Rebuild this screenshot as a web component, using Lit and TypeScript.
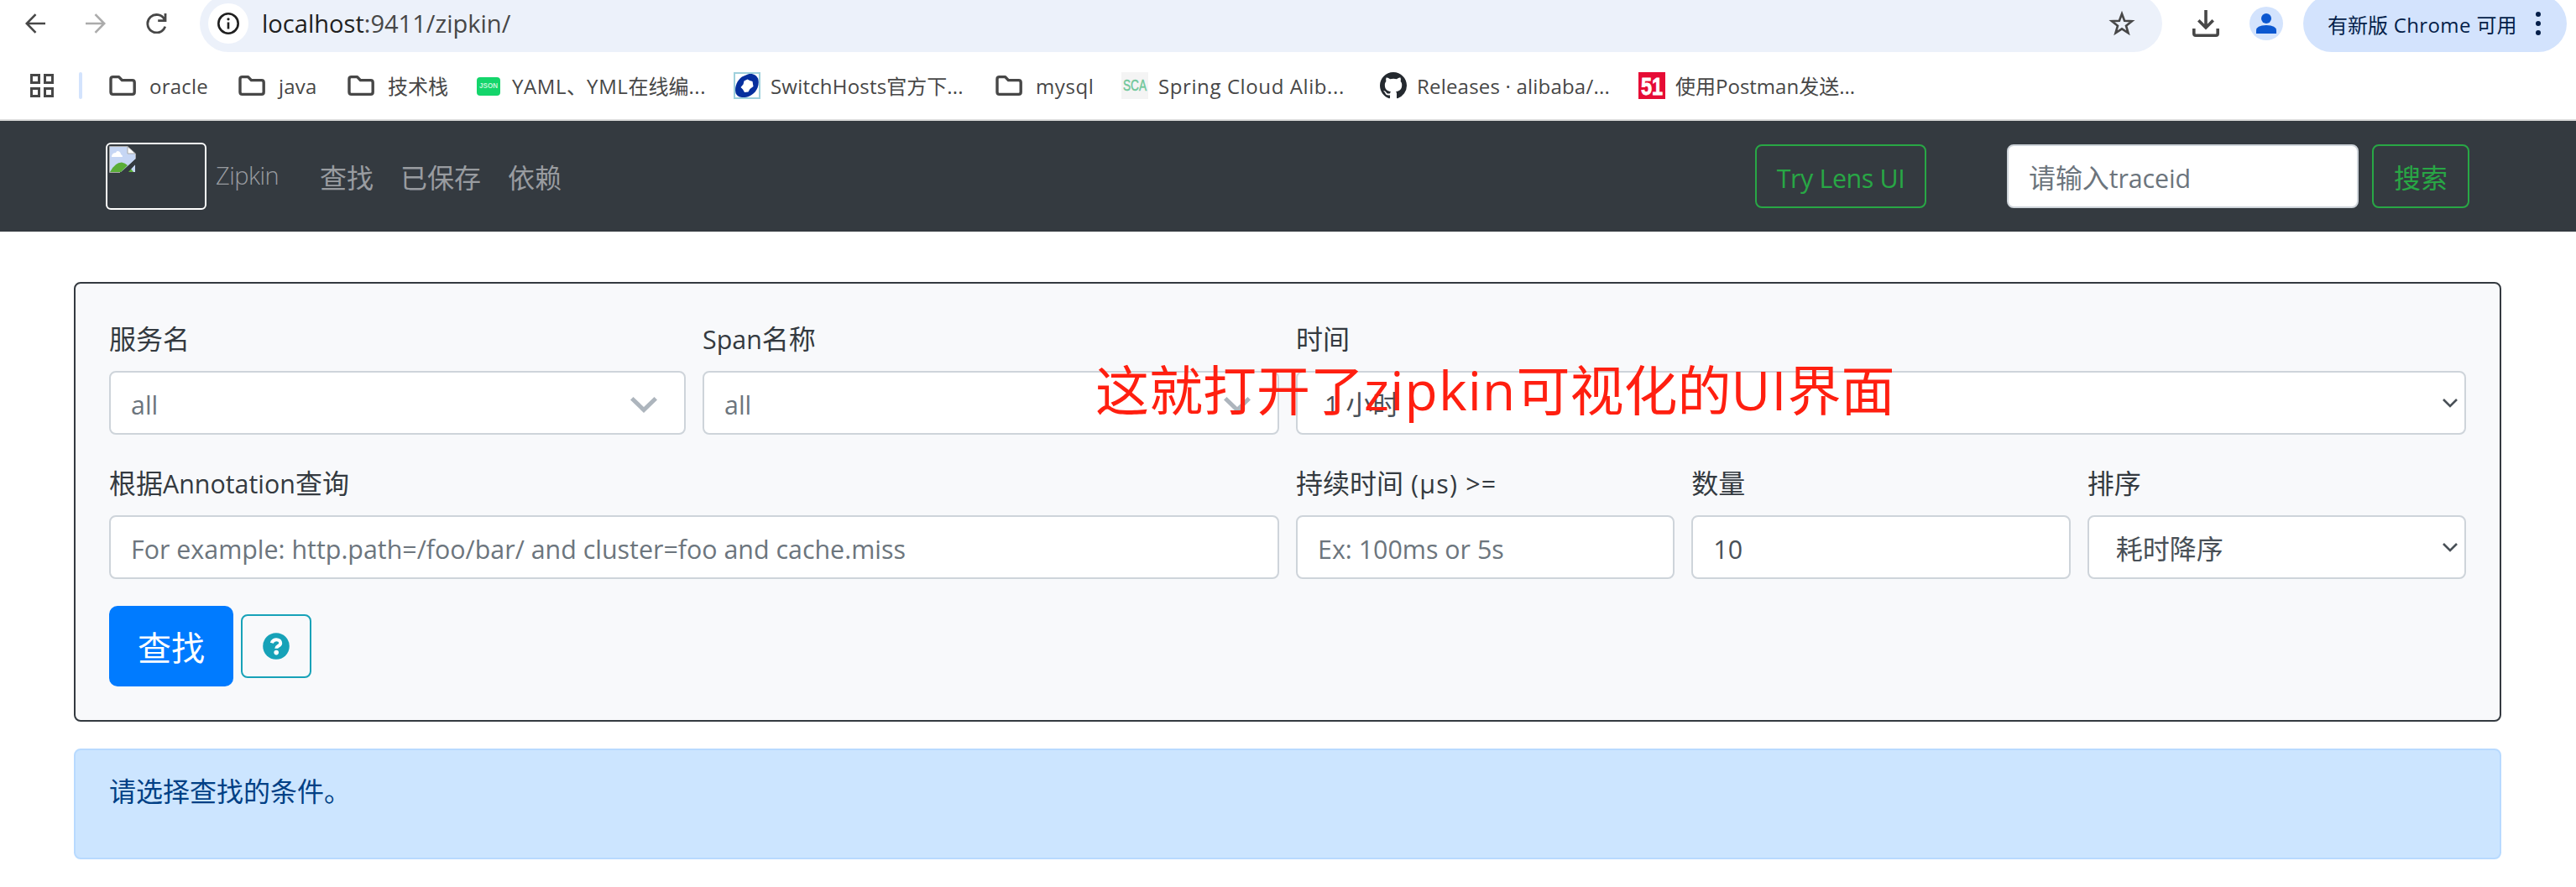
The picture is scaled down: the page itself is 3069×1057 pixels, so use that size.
import { LitElement, html, css, svg, TemplateResult } from "lit";
import { customElement } from "lit/decorators.js";

// Latin runs are set slightly smaller than the Chinese characters beside them.
const mixed = (text: string) =>
  text
    .split(/([\u3000-\u9fff\uff00-\uffef]+)/)
    .filter((part) => part.length > 0)
    .map((part) =>
      /[\u3000-\u9fff\uff00-\uffef]/.test(part)
        ? html`<span class="zh">${part}</span>`
        : html`<span class="en">${part}</span>`
    );

const folderIcon = html`<svg width="32" height="32" viewBox="0 0 32 32">
  <path d="M2 8.2Q2 5.6 4.6 5.6H11.6L15.4 9.6H27.6Q30.2 9.6 30.2 12.2V23.8Q30.2 26.4 27.6 26.4H4.6Q2 26.4 2 23.8Z" fill="none" stroke="#474747" stroke-width="3.4" stroke-linejoin="round"/>
</svg>`;

const jsonIcon = html`<svg width="32" height="32" viewBox="0 0 32 32">
  <rect x="2" y="6" width="28" height="22" rx="4" fill="#14d56b"/>
  <text x="16" y="19" text-anchor="middle" textLength="22" lengthAdjust="spacingAndGlyphs" font-family="Liberation Sans, sans-serif" font-size="9" font-weight="700" fill="#c4f6d9">JSON</text>
</svg>`;

const switchHostsIcon = html`<svg width="32" height="32" viewBox="0 0 32 32">
  <rect x="1" y="1" width="30" height="30" fill="#fff" stroke="#9fd0dc" stroke-width="2"/>
  <path d="M17 2.5C22 1 28 3 29.5 9C31 18 26 25 19 28.5C13 31 5 31 2.5 25C0.5 17 5 9 10 5.5Z" fill="#062f9e"/>
  <path d="M16.5 8.5Q19 10 22.5 11L23.5 17L19.5 20L17.5 23.5L13 24L11 20.5L8.5 18L11.5 14.5L12.5 10.5Z" fill="#fff"/>
</svg>`;

const scaIcon = html`<svg width="32" height="32" viewBox="0 0 32 32">
  <rect width="32" height="32" fill="#f4f4f4"/>
  <text x="16" y="22" text-anchor="middle" textLength="28" lengthAdjust="spacingAndGlyphs" font-family="Liberation Sans, sans-serif" font-size="18.5" fill="#6fc79a" stroke="#6fc79a" stroke-width=".5">SCA</text>
</svg>`;

const githubIcon = html`<svg width="32" height="32" viewBox="0 0 16 16">
  <path fill="#24292f" d="M8 0C3.58 0 0 3.58 0 8c0 3.54 2.29 6.53 5.47 7.59.4.07.55-.17.55-.38 0-.19-.01-.82-.01-1.49-2.01.37-2.53-.49-2.69-.94-.09-.23-.48-.94-.82-1.13-.28-.15-.68-.52-.01-.53.63-.01 1.08.58 1.23.82.72 1.21 1.87.87 2.33.66.07-.52.28-.87.51-1.07-1.78-.2-3.64-.89-3.64-3.95 0-.87.31-1.59.82-2.15-.08-.2-.36-1.02.08-2.12 0 0 .67-.21 2.2.82.64-.18 1.32-.27 2-.27s1.36.09 2 .27c1.53-1.04 2.2-.82 2.2-.82.44 1.1.16 1.92.08 2.12.51.56.82 1.27.82 2.15 0 3.07-1.87 3.75-3.65 3.95.29.25.54.73.54 1.48 0 1.07-.01 1.93-.01 2.2 0 .21.15.46.55.38A8.01 8.01 0 0 0 16 8c0-4.42-3.58-8-8-8Z"/>
</svg>`;

const ctoIcon = html`<svg width="32" height="32" viewBox="0 0 32 32">
  <rect width="32" height="32" fill="#e60c35"/>
  <text x="16" y="26.5" text-anchor="middle" textLength="26" lengthAdjust="spacingAndGlyphs" font-family="Liberation Sans, sans-serif" font-size="29" font-weight="700" fill="#fff" stroke="#fff" stroke-width=".8">51</text>
</svg>`;

const bookmarks: { icon: TemplateResult; label: string; cls: string }[] = [
  { icon: folderIcon, label: "oracle", cls: "wide" },
  { icon: folderIcon, label: "java", cls: "wide" },
  { icon: folderIcon, label: "技术栈", cls: "wide" },
  { icon: jsonIcon, label: "YAML、YML在线编...", cls: "loose" },
  { icon: switchHostsIcon, label: "SwitchHosts官方下...", cls: "" },
  { icon: folderIcon, label: "mysql", cls: "wide loose" },
  { icon: scaIcon, label: "Spring Cloud Alib...", cls: "loose" },
  { icon: githubIcon, label: "Releases · alibaba/...", cls: "" },
  { icon: ctoIcon, label: "使用Postman发送...", cls: "tight" },
];

const base = css`
  * { box-sizing: border-box; }
  svg { display: block; flex: none; }
  .en { font-size: 0.95em; }
`;

@customElement("browser-chrome")
class BrowserChrome extends LitElement {
  static styles = [base, css`
    :host { display: block; background: #fff; }
    .toolbar { display: flex; align-items: center; height: 68px; margin-top: -6px; padding-left: 30px; }
    .nav { display: flex; gap: 48px; margin-right: 38px; }
    .address { display: flex; align-items: center; width: 2338px; height: 68px; border-radius: 34px; background: #ecf1fa; padding: 0 32px 0 10px; margin-right: 36px; }
    .info { display: flex; align-items: center; justify-content: center; width: 48px; height: 48px; border-radius: 50%; background: #fff; }
    .url { flex: 1; margin-left: 16px; font-size: 30.6px; color: #474747; white-space: pre; padding-bottom: 2px; }
    .host { color: #1f1f1f; }
    .avatar { margin: 0 24px 0 36px; }
    .update { display: flex; align-items: center; justify-content: space-between; width: 314px; height: 68px; border-radius: 34px; background: #d3e3fd; color: #041e49; padding: 0 31px 0 29px; font-size: 24px; white-space: pre; }
    .update .en { font-size: 1em; letter-spacing: 0.4px; }
    .bar { display: flex; align-items: center; height: 80px; padding-left: 36px; font-size: 24px; color: #474747; }
    .sep { width: 4px; height: 32px; border-radius: 2px; background: #d3e3fd; margin: 0 32px 0 30px; }
    .marks { display: grid; grid-template-columns: 154px 130px 152px 308px 312px 150px 308px 308px auto; }
    .mark { display: flex; align-items: center; gap: 12px; }
    .text { white-space: pre; line-height: 34px; padding-top: 1px; }
    .mark .en { font-size: 1em; letter-spacing: 0.2px; }
    .mark.wide { gap: 16px; }
    .mark.loose .en { letter-spacing: 0.6px; }
    .mark.tight .en { letter-spacing: 0; }
    .line { height: 2px; background: #dcdcdc; }
  `];
  render() {
    return html`
      <div class="toolbar">
        <div class="nav">
          <svg width="24" height="24" viewBox="0 0 24 24" fill="none" stroke="#474747" stroke-width="2.6"><path d="M24 12H2M12.5 1.2L1.8 12L12.5 22.8"/></svg>
          <svg width="24" height="24" viewBox="0 0 24 24" fill="none" stroke="#ababab" stroke-width="2.6"><path d="M0 12H22M11.5 1.2L22.2 12L11.5 22.8"/></svg>
          <svg width="26" height="24" viewBox="0 0 26 24" fill="none" stroke="#474747" stroke-width="2.8"><path d="M22.7 15.6A10.7 10.7 0 1 1 22 7.2M23 0V8.6H14.2"/></svg>
        </div>
        <div class="address">
          <div class="info">
            <svg width="26" height="26" viewBox="0 0 26 26"><circle cx="13" cy="13" r="11.7" fill="none" stroke="#1f1f1f" stroke-width="2.6"/><path d="M13 11.5V19.5" stroke="#1f1f1f" stroke-width="2.6"/><circle cx="13" cy="7.8" r="1.6" fill="#1f1f1f"/></svg>
          </div>
          <div class="url"><span class="en"><span class="host">localhost</span>:9411/zipkin/</span></div>
          <svg width="32" height="32" viewBox="0 0 32 32"><path d="M16 4.5L19.1 12.8L28 13.2L21 18.7L23.5 27.3L16 22.3L8.5 27.3L11 18.7L4 13.2L12.9 12.8Z" fill="none" stroke="#474747" stroke-width="2.6"/></svg>
        </div>
        <svg width="32" height="32" viewBox="0 0 32 32" fill="none" stroke="#474747" stroke-width="3.6"><path d="M16 0V21M7.3 12.2L16 21L24.7 12.2M1.8 22V28Q1.8 30.2 4 30.2H28Q30.2 30.2 30.2 28V22"/></svg>
        <svg class="avatar" width="40" height="40" viewBox="0 0 40 40"><circle cx="20" cy="20" r="20" fill="#d3e3fd"/><circle cx="20" cy="14" r="6" fill="#0b57d0"/><path d="M8 32V28.5Q8 22 20 22T32 28.5V32Z" fill="#0b57d0"/></svg>
        <div class="update">
          <div>${mixed("有新版 Chrome 可用")}</div>
          <svg width="6" height="30" viewBox="0 0 6 30" fill="#041e49"><circle cx="3" cy="4" r="3"/><circle cx="3" cy="15" r="3"/><circle cx="3" cy="26" r="3"/></svg>
        </div>
      </div>
      <div class="bar">
        <svg width="28" height="28" viewBox="0 0 28 28" fill="none" stroke="#474747" stroke-width="3"><path d="M1.5 1.5H10.5V10.5H1.5ZM17.5 1.5H26.5V10.5H17.5ZM1.5 17.5H10.5V26.5H1.5ZM17.5 17.5H26.5V26.5H17.5Z"/></svg>
        <div class="sep"></div>
        <div class="marks">
          ${bookmarks.map((b) => html`<div class="mark ${b.cls}">${b.icon}<div class="text">${mixed(b.label)}</div></div>`)}
        </div>
      </div>
      <div class="line"></div>
    `;
  }
}

@customElement("zipkin-navbar")
class ZipkinNavbar extends LitElement {
  static styles = [base, css`
    :host { display: flex; align-items: center; height: 132px; background: #343a40; padding: 0 127px 0 126px; font-size: 32px; line-height: 48px; color: #999ca0; }
    .logo { width: 120px; height: 80px; border: 2px solid #fff; border-radius: 6px; padding: 2px; }
    .brand { margin: 0 49px 0 11px; width: 75px; font-size: 29px; letter-spacing: -0.5px; font-weight: 300; padding-bottom: 2px; }
    .links { display: flex; gap: 32px; flex: 1; padding-top: 4px; }
    .button { height: 76px; border: 2px solid #28a745; border-radius: 8px; color: #28a745; padding: 14px 0 0; text-align: center; white-space: nowrap; }
    .lens { width: 204px; margin-right: 96px; letter-spacing: -0.4px; }
    .field { width: 419px; height: 76px; border: 2px solid #ced4da; border-radius: 8px; background: #fff; color: #6c757d; padding: 14px 24px 0; margin-right: 16px; white-space: nowrap; letter-spacing: -0.1px; }
    .search { width: 116px; }
  `];
  render() {
    return html`
      <div class="logo">
        <svg width="32" height="32" viewBox="0 0 32 32">
          <path d="M1 1H22L31 9V16L16 31H1Z" fill="#c6d6f4"/>
          <path d="M3 12Q4 8 8 8Q9 5 12 6.5Q14 7.5 14 10Q16 10.5 16 13H3Z" fill="#fff"/>
          <path d="M1 31Q7 19.5 15 19.5Q19 20 22 23L14 31Z" fill="#5aad38"/>
          <path d="M31 22V31H22Z" fill="#c6d6f4"/>
          <path d="M22 31L25.5 26.5L29 31Z" fill="#5aad38"/>
          <path d="M22 1L31 9H22Z" fill="#fff"/>
          <path d="M13 31.5H.5V.5H22L31.5 9V16M22 1V9H31" fill="none" stroke="#a8a8a8"/>
          <path d="M32 15V21L22 32H13Z" fill="#343a40"/>
        </svg>
      </div>
      <div class="brand">Zipkin</div>
      <div class="links"><span>查找</span><span>已保存</span><span>依赖</span></div>
      <div class="button lens">${mixed("Try Lens UI")}</div>
      <div class="field">${mixed("请输入traceid")}</div>
      <div class="button search">搜索</div>
    `;
  }
}

const thickChevron = svg`<path d="M0 3.5L3.5 0L16 12L28.5 0L32 3.5L16 19Z" fill="#adb5bd"/>`;

@customElement("search-panel")
class SearchPanel extends LitElement {
  static styles = [base, css`
    :host { display: block; margin: 60px 89px 0 88px; height: 524px; border: 2px solid #343a40; border-radius: 8px; background: #f8f9fb; padding: 40px; font-size: 32px; line-height: 48px; color: #343a40; }
    .grid { display: grid; grid-template-columns: repeat(12, minmax(0, 1fr)); column-gap: 20px; row-gap: 32px; }
    .c2 { grid-column: span 2; }
    .c3 { grid-column: span 3; }
    .c6 { grid-column: span 6; }
    .label { display: block; margin-bottom: 16px; padding-top: 2px; height: 48px; white-space: pre; }
    .spaced .label .en { letter-spacing: 1.2px; }
    .control { display: flex; justify-content: space-between; height: 76px; border: 2px solid #ced4da; border-radius: 8px; background: #fff; color: #495057; padding: 14px 24px 0; }
    .value { white-space: pre; }
    .hint { color: #6c757d; }
    .combo { padding-right: 32px; }
    .combo svg { margin-top: 15px; }
    .select { padding-left: 32px; padding-right: 8px; }
    .select svg { margin-top: 17px; }
    .actions { display: flex; align-items: center; gap: 9px; margin-top: 32px; }
    .submit { width: 148px; height: 96px; border-radius: 10px; background: #007bff; color: #fff; font-size: 40px; line-height: 60px; text-align: center; padding-top: 20px; }
    .help { display: flex; align-items: center; justify-content: center; width: 84px; height: 76px; border: 2px solid #17a2b8; border-radius: 8px; }
  `];
  private input(cls: string, label: string, text: string, hint: boolean) {
    return html`<div class=${cls}><span class="label">${mixed(label)}</span><div class="control ${hint ? "hint" : ""}"><div class="value">${mixed(text)}</div></div></div>`;
  }
  private combo(label: string) {
    return html`<div class="c3"><span class="label">${mixed(label)}</span><div class="control combo hint"><div class="value">${mixed("all")}</div><svg width="32" height="19" viewBox="0 0 32 19">${thickChevron}</svg></div></div>`;
  }
  private select(cls: string, label: string, text: string) {
    return html`<div class=${cls}><span class="label">${mixed(label)}</span><div class="control select"><div class="value">${mixed(text)}</div><svg width="18" height="11" viewBox="0 0 18 11"><path d="M1 1L9 9L17 1" fill="none" stroke="#495057" stroke-width="2.6"/></svg></div></div>`;
  }
  render() {
    return html`
      <div class="grid">
        ${this.combo("服务名")} ${this.combo("Span名称")} ${this.select("c6", "时间", "1 小时")}
        ${this.input("c6", "根据Annotation查询", "For example: http.path=/foo/bar/ and cluster=foo and cache.miss", true)}
        ${this.input("c2 spaced", "持续时间 (μs) >=", "Ex: 100ms or 5s", true)}
        ${this.input("c2", "数量", "10", false)}
        ${this.select("c2", "排序", "耗时降序")}
      </div>
      <div class="actions">
        <div class="submit">查找</div>
        <div class="help">
          <svg width="32" height="32" viewBox="0 0 32 32"><circle cx="16" cy="16" r="15.8" fill="#17a2b8"/><path d="M10.8 12.3C11.6 9.6 13.3 8.2 16.2 8.2C19 8.2 21.2 9.9 21.2 12.4C21.2 16 16.2 15.6 16.2 18.8" fill="none" stroke="#fff" stroke-width="4"/><circle cx="16.2" cy="23.6" r="2.8" fill="#fff"/></svg>
        </div>
      </div>
    `;
  }
}

@customElement("app-root")
class AppRoot extends LitElement {
  static styles = [base, css`
    :host { display: block; position: relative; width: 3069px; height: 1057px; overflow: hidden; background: #fff; font-family: "Open Sans", "Noto Sans CJK SC", sans-serif; }
    .alert { margin: 32px 89px 0 88px; height: 132px; border: 2px solid #b8daff; border-radius: 8px; background: #cce5ff; color: #004085; padding: 25px 40px; font-size: 32px; line-height: 48px; }
    .note { position: absolute; left: 1305px; top: 418px; font-size: 64px; line-height: 94px; color: #ff1f10; white-space: pre; }
    .note .en { font-size: 1em; letter-spacing: 1.2px; }
  `];
  render() {
    return html`
      <browser-chrome></browser-chrome>
      <zipkin-navbar></zipkin-navbar>
      <search-panel></search-panel>
      <div class="alert">请选择查找的条件。</div>
      <div class="note">${mixed("这就打开了zipkin可视化的UI界面")}</div>
    `;
  }
}
